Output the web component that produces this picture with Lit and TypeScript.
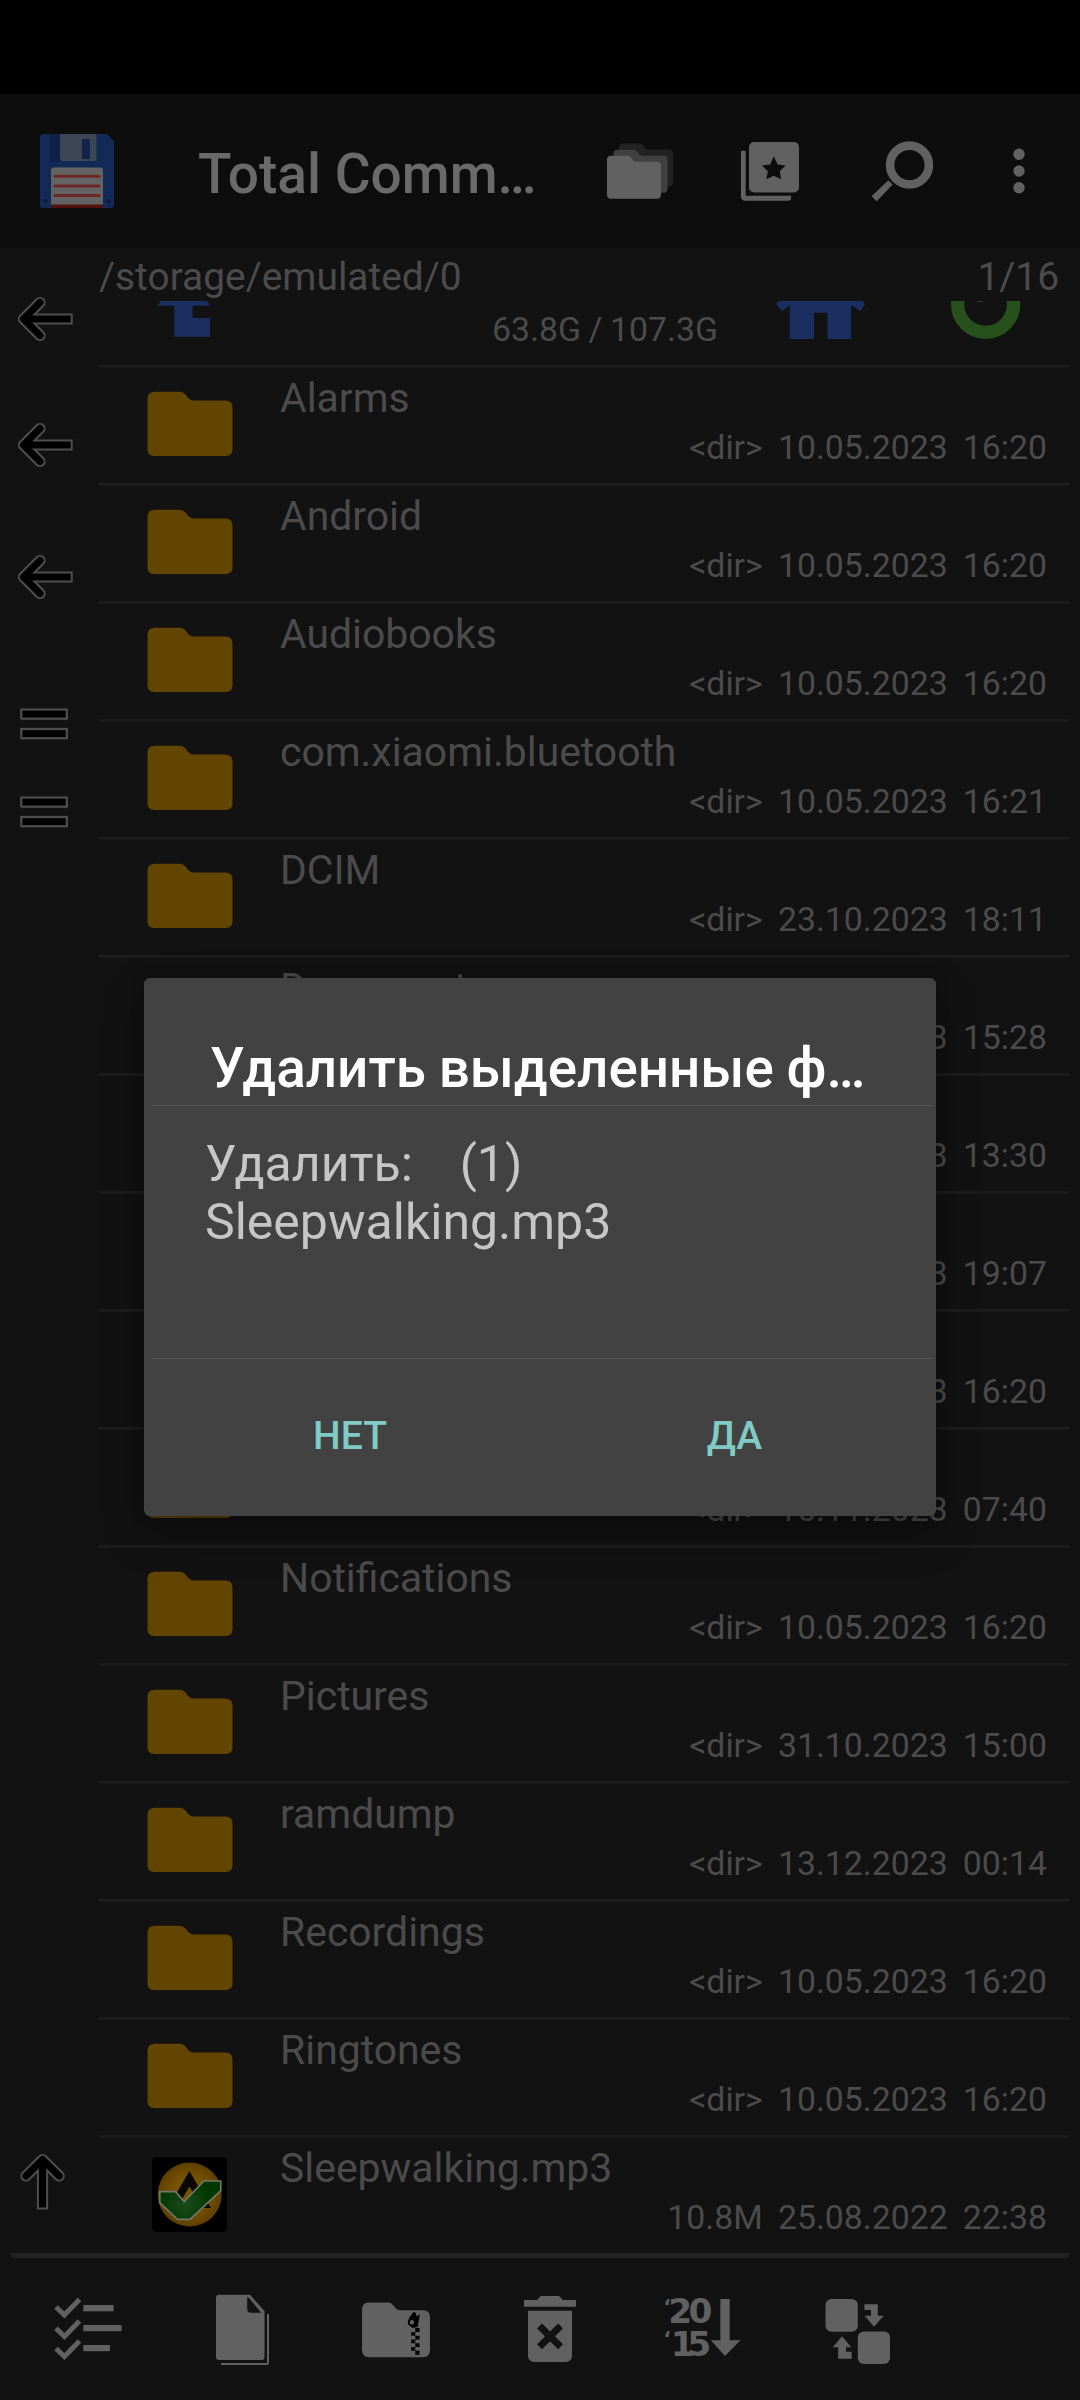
import { LitElement, html, css, svg, nothing } from "lit";
import type { SVGTemplateResult } from "lit";
import { customElement } from "lit/decorators.js";

interface Entry {
  name: string;
  meta: string;
  kind: "dir" | "audio";
}

const ENTRIES: Entry[] = [
  { name: "Alarms", meta: "<dir>  10.05.2023  16:20", kind: "dir" },
  { name: "Android", meta: "<dir>  10.05.2023  16:20", kind: "dir" },
  { name: "Audiobooks", meta: "<dir>  10.05.2023  16:20", kind: "dir" },
  { name: "com.xiaomi.bluetooth", meta: "<dir>  10.05.2023  16:21", kind: "dir" },
  { name: "DCIM", meta: "<dir>  23.10.2023  18:11", kind: "dir" },
  { name: "Documents", meta: "3  15:28", kind: "dir" },
  { name: "", meta: "3  13:30", kind: "dir" },
  { name: "", meta: "3  19:07", kind: "dir" },
  { name: "", meta: "3  16:20", kind: "dir" },
  { name: "", meta: "<dir>  15.11.2023  07:40", kind: "dir" },
  { name: "Notifications", meta: "<dir>  10.05.2023  16:20", kind: "dir" },
  { name: "Pictures", meta: "<dir>  31.10.2023  15:00", kind: "dir" },
  { name: "ramdump", meta: "<dir>  13.12.2023  00:14", kind: "dir" },
  { name: "Recordings", meta: "<dir>  10.05.2023  16:20", kind: "dir" },
  { name: "Ringtones", meta: "<dir>  10.05.2023  16:20", kind: "dir" },
  { name: "Sleepwalking.mp3", meta: "10.8M  25.08.2022  22:38", kind: "audio" },
];

/** Icon whose viewBox has its origin at (x, y). */
const icon = (cls: string, x: number, y: number, w: number, h: number, body: SVGTemplateResult) => html`
  <svg class=${cls} width=${w} height=${h} viewBox="${x} ${y} ${w} ${h}" fill="#616161">${body}</svg>
`;

const folderShape = (x: number, y: number, fill: string) => svg`
  <path transform="translate(${x} ${y})" fill=${fill}
    d="M4 0H20Q22.5 0 24 2L26 4.500Q27.500 6 29.500 6H50Q54 6 54 10V39Q54 43 50 43H4Q0 43 0 39V4Q0 0 4 0Z"/>`;

const floppy = icon("floppy", 40, 134, 74, 74, svg`
  <path fill="#132a57" d="M43 134H107L114 141V205Q114 208 111 208H43Q40 208 40 205V137Q40 134 43 134Z"/>
  <rect fill="#102149" x="50" y="134" width="10" height="28"/>
  <path fill="#3d4654" d="M60 134H96.500V158Q96.500 161 93.500 161H63Q60 161 60 158Z"/>
  <rect fill="#12244d" x="82" y="139" width="8" height="20"/>
  <path fill="#636363" d="M51 208V170Q51 167.500 53.500 167.500H100.500Q103 167.500 103 170V208Z"/>
  <rect fill="#4f120d" x="51" y="204.500" width="52" height="3.500"/>
  <path stroke="#6c2826" stroke-width="3" stroke-linecap="round" d="M55 176.300H99M55 186H99M55 195.600H99"/>
  <circle fill="#0b1a3a" cx="45.500" cy="201" r="2"/><circle fill="#0b1a3a" cx="108.500" cy="201" r="2"/>`);

const folders = icon("folders", 607, 143, 67, 56, svg`
  ${folderShape(619, 143.5, "#222222")}
  ${folderShape(613.5, 149.8, "#404040")}
  ${folderShape(607, 155.7, "#616161")}`);

const bookmarks = icon("bookmarks", 741, 142, 58, 59, svg`
  <rect x="749" y="142" width="50" height="50.500" rx="5"/>
  <path d="M741 152Q741 150.700 742.300 150.700H744.400Q745.700 150.700 745.700 152V195.700H791V198Q791 200.700 788.500 200.700H745.500Q741 200.700 741 196.500Z"/>
  <path fill="#0d0d0d" d="M773.800 156.300L777.500 164.500L785.500 165.500L779.800 171.300L781.200 179.300L773.800 175.700L766.400 179.300L767.800 171.300L762 165.500L770.100 164.500Z"/>`);

const search = icon("search", 871, 140, 63, 61, svg`
  <circle cx="909.500" cy="164" r="19.400" fill="none" stroke="#616161" stroke-width="8.600"/>
  <path d="M888.300 179.300L892.600 183.600L876.800 200.300L871.600 195.300Z"/>`);

const overflow = icon("overflow", 1013, 148, 12, 46, svg`
  <circle cx="1019" cy="154.300" r="5.700"/><circle cx="1019" cy="171" r="5.700"/><circle cx="1019" cy="187.700" r="5.700"/>`);

const arrowLeft = (cls: string) => icon(`arrow ${cls}`, 17, 297, 56, 44, svg`
  <g fill="none" stroke-linejoin="round">
    <path stroke="#4e4e4e" stroke-width="11.200" d="M24 319H72.700"/>
    <path stroke="#4e4e4e" stroke-width="11.200" stroke-linecap="round" d="M40 302.500L23.500 319L40 335.500"/>
    <path stroke="#000000" stroke-width="7.200" d="M24 319H70.700"/>
    <path stroke="#000000" stroke-width="7.200" stroke-linecap="round" d="M40 302.500L23.500 319L40 335.500"/>
  </g>`);

const arrowUp = icon("arrow up", 19, 2153, 47, 57, svg`
  <g fill="none" stroke-linejoin="round">
    <path stroke="#4e4e4e" stroke-width="11.200" d="M42.500 2160V2209.500"/>
    <path stroke="#4e4e4e" stroke-width="11.200" stroke-linecap="round" d="M26 2176L42.500 2159.500L59.200 2176"/>
    <path stroke="#000000" stroke-width="7.200" d="M42.500 2160V2207.500"/>
    <path stroke="#000000" stroke-width="7.200" stroke-linecap="round" d="M26 2176L42.500 2159.500L59.200 2176"/>
  </g>`);

const equals = (cls: string) => icon(`equals ${cls}`, 20, 708, 48, 32, svg`
  <g fill="#000000" stroke="#4e4e4e" stroke-width="2.200">
    <rect x="21.300" y="709.500" width="45.500" height="9.200"/>
    <rect x="21.300" y="729" width="45.500" height="9.200"/>
  </g>`);

const upDir = icon("up-dir", 157, 301, 53, 36, svg`
  <path fill="#1a2f60" d="M160.700 301H207L210 305.700H192.500V318H210V336.700H174.300V305.700H157.500Z"/>`);

const home = icon("home", 776, 301, 89, 38, svg`
  <path fill="#1a2f60" d="M778.500 301H862.500L865 304.300L860.500 311L851.200 305.300V339H827.500V312.700H814V339H789.700V305.300L782 311L776 304.300Z"/>`);

const ring = icon("ring", 950, 301, 71, 38, svg`
  <circle cx="985.600" cy="304.300" r="28" fill="none" stroke="#28501c" stroke-width="13.300"/>
  <ellipse fill="#28501c" cx="979.700" cy="300.500" rx="3.500" ry="1.500"/>`);

const folder = icon("thumb", 147, 391, 86, 65, svg`
  <path fill="#614500" d="M155 391.700H180Q183 391.700 185.500 394.500L188 397.700Q190.500 400.500 193.500 400.500H225.500Q232.500 400.500 232.500 407.500V449.500Q232.500 456 226 456H154Q147.500 456 147.500 449.500V399Q147.500 391.700 155 391.700Z"/>`);

const audio = icon("cover", 152, 2157, 75, 75, svg`
  <defs>
    <radialGradient id="disc"><stop offset="0.500" stop-color="#785400"/><stop offset="1" stop-color="#5f3f00"/></radialGradient>
    <radialGradient id="tick" gradientUnits="userSpaceOnUse" cx="186" cy="2204" r="26"><stop offset="0" stop-color="#1d4a1c"/><stop offset="1" stop-color="#003700"/></radialGradient>
  </defs>
  <rect fill="#000000" x="152" y="2157" width="75" height="75" rx="4"/>
  <circle fill="url(#disc)" cx="189.700" cy="2194.500" r="32"/>
  <path fill="#0a0800" d="M189.400 2171L211 2208H202L189.400 2186.500L177 2208H168Z"/>
  <path fill="url(#tick)" stroke="#707668" stroke-width="1.700"
    d="M159.800 2191.700H175.600L184.200 2201.500L203.900 2181H220.800V2190.700L190 2219.300H177.300L159.800 2202.700Z"/>`);

const checklist = icon("tool", 54, 2292, 68, 74, svg`
  <path fill="none" stroke="#616161" stroke-width="5"
    d="M56 2307L64.400 2315L79.500 2299.500M56 2328.300L64.400 2336.500L79.500 2321M56 2348.500L64.400 2356.500L79.500 2341"/>
  <rect x="83.300" y="2305" width="30.300" height="6.300"/>
  <rect x="83.300" y="2325" width="38.300" height="6.200"/>
  <rect x="83.300" y="2345" width="26.600" height="6.200"/>`);

const documentIcon = icon("tool doc", 215, 2292, 55, 74, svg`
  <path fill-rule="evenodd" d="M219 2294.700H250L264.500 2311V2357Q264.500 2360 261.500 2360H219Q216 2360 216 2357V2297.700Q216 2294.700 219 2294.700ZM247.200 2298V2309Q247.200 2312.700 251 2312.700H261L249 2298Q247.200 2296.500 247.200 2298Z"/>
  <path fill="none" stroke="#616161" stroke-width="2" d="M221 2364H266.500Q268 2364 268 2362.500V2314"/>`);

const zip = icon("tool zip", 362, 2292, 68, 74, svg`
  <path d="M369 2302.500H388.500Q391 2302.500 393 2305L395.500 2308Q397.500 2310.300 400 2310.300H423Q430 2310.300 430 2317.500V2350Q430 2357.300 423 2357.300H369Q362 2357.300 362 2350V2309.500Q362 2302.500 369 2302.500Z"/>
  <path fill="#000000" d="M413.500 2312L416 2313L416.500 2316.500L419 2315L420 2313.500L417.500 2327L412.500 2328L408 2324L409 2318Z"/>
  <circle cx="412" cy="2322.300" r="3.200" stroke="#000000" stroke-width="2"/>
  <path fill="#000000" d="M415.300 2328H419.500V2332H415.300ZM411.200 2332H415.300V2335.700H411.200ZM415.300 2335.700H419.500V2339.500H415.300ZM411.200 2339.500H415.300V2343.300H411.200ZM415.300 2343.300H419.500V2347H415.300ZM411.200 2347H415.300V2350.800H411.200ZM415.300 2350.800H419.500V2354.700H415.300Z"/>`);

const trash = icon("tool trash", 524, 2292, 52, 74, svg`
  <path d="M524 2300H537L541 2296H559L563 2300H576V2306.700H524Z"/>
  <path d="M528 2310.700H572V2355.500Q572 2362 565.500 2362H534.500Q528 2362 528 2355.500Z"/>
  <path stroke="#121212" stroke-width="7" d="M539.500 2326L560.500 2346.700M560.500 2326L539.500 2346.700"/>`);

const sort = icon("tool sort", 664, 2292, 77, 74, svg`
  <text class="year" x="663.500 668.200 688.400" y="2312.500 2323.300 2323.300"><tspan class="tick">‘</tspan>20</text>
  <text class="year" x="663.500 670.700 687.300" y="2345 2355.700 2355.700"><tspan class="tick">‘</tspan>15</text>
  <path d="M720.400 2299H729.700V2340.300H740.400L725 2356L710.800 2340.300H720.400Z"/>`);

const swap = icon("tool swap", 825, 2292, 65, 74, svg`
  <rect x="825.500" y="2299" width="32.300" height="32.700" rx="6"/>
  <rect x="857.800" y="2331.500" width="32.200" height="32.500" rx="6"/>
  <path d="M864.400 2304.300H877.800V2315.700H883.700L874 2326.700L864.600 2315.700H871V2310H864.400Z"/>
  <path d="M842 2336.300L851.300 2347.300H846V2351.700H851.700V2358.700H838.200V2347.300H832.700Z"/>`);

@customElement("app-root")
export class AppRoot extends LitElement {
  static styles = css`
    :host {
      display: block;
      position: relative;
      width: 1080px;
      height: 2400px;
      overflow: hidden;
      background: #121212;
      color: #4b4b4b;
      font-family: Roboto, "Noto Sans", sans-serif;
    }
    svg { display: block; flex: none; }
    .screen { display: flex; flex-direction: column; height: 2400px; }
    .status { height: 94px; background: #000; flex: none; }
    .header {
      height: 154px;
      box-sizing: border-box;
      flex: none;
      display: flex;
      align-items: center;
      padding-left: 40px;
      background: #0d0d0d;
    }
    .title {
      width: 409px;
      margin-left: 84px;
      padding-top: 5px;
      font-size: 55px;
      line-height: 64px;
      font-weight: 500;
      color: #6a6a6a;
      white-space: nowrap;
    }
    .bookmarks { margin-left: 67px; }
    .search { margin-left: 72px; }
    .overflow { margin-left: 79px; }
    .main { display: flex; height: 2005px; flex: none; }
    .rail { width: 99px; flex: none; display: flex; flex-direction: column; }
    .arrow { margin-left: 17px; overflow: visible; }
    .a1 { margin-top: 49px; }
    .a2 { margin-top: 82px; }
    .a3 { margin-top: 88px; }
    .e1 { margin: 109px 0 0 20px; }
    .e2 { margin: 56px 0 0 20px; }
    .up { margin: auto 0 43px 19px; }
    .pane { width: 970px; flex: none; }
    .path {
      height: 53px;
      line-height: 57px;
      font-size: 38.9px;
      display: flex;
      justify-content: space-between;
      padding-right: 10px;
    }
    .drive {
      height: 64px;
      display: flex;
      padding-left: 58px;
      font-size: 33.8px;
      line-height: 57px;
      word-spacing: -0.8px;
    }
    .space { width: 284px; margin-left: 282px; white-space: pre; }
    .ring { margin-left: 85px; }
    .row {
      height: 115px;
      border-top: 3px solid #1c1c1c;
      display: flex;
    }
    .thumb { margin: 23px 47px 0 48px; }
    .cover { margin: 19px 53px 0 53px; }
    .info { width: 767px; }
    .name { height: 60px; line-height: 60px; font-size: 40.9px; }
    .meta {
      line-height: 39px;
      font-size: 33.8px;
      word-spacing: -0.8px;
      text-align: right;
      white-space: pre;
    }
    .toolbar {
      margin: 0 11px;
      border-top: 5px solid #212121;
      padding: 34px 0 0 43px;
      display: flex;
    }
    .doc { margin-left: 93px; }
    .zip { margin-left: 92px; }
    .trash { margin-left: 94px; }
    .sort { margin-left: 88px; overflow: visible; }
    .swap { margin-left: 84px; }
    .year { font-family: "DejaVu Sans", sans-serif; font-weight: 700; font-size: 34.4px; }
    .tick { font-size: 19px; }
    .dialog {
      position: absolute;
      left: 144px;
      top: 978px;
      width: 792px;
      height: 538px;
      box-sizing: border-box;
      padding: 0 3px 0 8px;
      border-radius: 6px;
      background: #424242;
      box-shadow: 0 18px 44px rgba(0, 0, 0, 0.32), 0 0 14px rgba(0, 0, 0, 0.18);
    }
    .heading {
      height: 128px;
      box-sizing: border-box;
      padding: 58px 0 0 58px;
      border-bottom: 1px solid #565656;
      font-size: 54.8px;
      line-height: 64px;
      font-weight: 500;
      word-spacing: -0.8px;
      color: #fff;
      white-space: nowrap;
    }
    .message {
      height: 253px;
      box-sizing: border-box;
      padding: 29px 0 0 53px;
      border-bottom: 1px solid #565656;
      font-size: 50px;
      line-height: 58px;
      word-spacing: -0.7px;
      color: #c6c6c6;
      white-space: pre;
    }
    .actions {
      display: grid;
      grid-template-columns: 384px 385px;
      padding: 45px 0 0 6px;
      font-size: 39px;
      line-height: 64px;
      font-weight: 500;
      text-align: center;
      color: #80cbc4;
    }
  `;

  private renderEntry(entry: Entry) {
    return html`
      <div class="row">
        ${entry.kind === "dir" ? folder : audio}
        <div class="info">
          <div class="name">${entry.name || nothing}</div>
          <div class="meta">${entry.meta}</div>
        </div>
      </div>
    `;
  }

  render() {
    return html`
      <div class="screen">
        <div class="status"></div>
        <div class="header">
          ${floppy}
          <div class="title">Total Comm…</div>
          ${folders}${bookmarks}${search}${overflow}
        </div>
        <div class="main">
          <div class="rail">
            ${arrowLeft("a1")}${arrowLeft("a2")}${arrowLeft("a3")}
            ${equals("e1")}${equals("e2")}${arrowUp}
          </div>
          <div class="pane">
            <div class="path"><span>/storage/emulated/0</span><span>1/16</span></div>
            <div class="drive">
              ${upDir}
              <div class="space">63.8G / 107.3G</div>
              ${home}${ring}
            </div>
            ${ENTRIES.map((entry) => this.renderEntry(entry))}
          </div>
        </div>
        <div class="toolbar">${checklist}${documentIcon}${zip}${trash}${sort}${swap}</div>
      </div>
      <div class="dialog">
        <div class="heading">Удалить выделенные ф…</div>
        <div class="message">${"Удалить:    (1)\nSleepwalking.mp3"}</div>
        <div class="actions"><span>НЕТ</span><span>ДА</span></div>
      </div>
    `;
  }
}
